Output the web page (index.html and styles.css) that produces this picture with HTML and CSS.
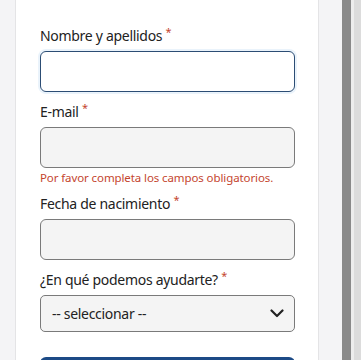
FILE: index.html
```html
<!DOCTYPE html>
<html>
<head>
    <meta charset="utf-8">
    <title>Formulario de contacto</title>
    <link rel="stylesheet" href="styles.css">
</head>
<body>
    <div class="page">
        <div class="card">
            <form class="form">
                <div class="field">
                    <label class="label" for="nombre">Nombre y apellidos <span class="req">*</span></label>
                    <input type="text" class="input input-focus" id="nombre">
                </div>
                <div class="field">
                    <label class="label" for="email">E-mail <span class="req">*</span></label>
                    <input type="text" class="input" id="email">
                    <div class="error">Por favor completa los campos obligatorios.</div>
                </div>
                <div class="field">
                    <label class="label" for="fecha">Fecha de nacimiento <span class="req">*</span></label>
                    <input type="text" class="input" id="fecha">
                </div>
                <div class="field">
                    <label class="label" for="ayuda">¿En qué podemos ayudarte? <span class="req">*</span></label>
                    <div class="select">
                        <span>-- seleccionar --</span>
                        <svg width="14" height="9" viewBox="0 0 14 9"><path d="M1.5 1.5 L7 7 L12.5 1.5" fill="none" stroke="#222" stroke-width="2.2" stroke-linecap="round" stroke-linejoin="round"/></svg>
                    </div>
                </div>
                <div class="btn"></div>
            </form>
        </div>
        <div class="gutter"></div>
    </div>
    <div class="scrollbar">
        <div class="thumb"></div>
        <div class="track"></div>
    </div>
</body>
</html>
```

FILE: styles.css
```css
html, body {
    margin: 0;
    height: 100%;
    overflow: hidden;
}

body {
    display: flex;
    background: #f4f4f6;
    font-family: "Noto Sans", "Open Sans", sans-serif;
    color: #222;
}

.page {
    flex: 1;
    display: flex;
    padding-left: 15px;
}

.card {
    box-sizing: border-box;
    flex: 0 0 304px;
    background: #fff;
    border-left: 1px solid #e4e4e6;
    border-right: 1px solid #e4e4e6;
    padding: 23px 23px 0 24px;
}

.gutter {
    flex: 1;
}

.field {
    display: flex;
    flex-direction: column;
    margin-bottom: 7px;
}

.label {
    font-size: 14px;
    line-height: 20px;
    padding-top: 3px;
    margin-bottom: 5px;
    letter-spacing: -0.3px;
}

.req {
    color: #c4452e;
    font-size: 11px;
    line-height: 0;
    vertical-align: 5px;
}

.input {
    box-sizing: border-box;
    height: 41px;
    width: 100%;
    margin: 0;
    border: 1px solid #7a7a7a;
    border-radius: 6px;
    background: #f4f4f4;
    font-family: inherit;
}

.input-focus {
    background: #fff;
    border-color: #2c4d74;
    box-shadow: 0 0 0 2px #eaf3fb;
    outline: none;
}

.error {
    color: #c4452e;
    font-size: 11.5px;
    line-height: 14px;
    margin-top: 3px;
    margin-bottom: -1px;
    letter-spacing: -0.1px;
}

.select {
    box-sizing: border-box;
    height: 37px;
    display: flex;
    align-items: center;
    justify-content: space-between;
    padding: 0 10px 0 11px;
    border: 1px solid #7a7a7a;
    border-radius: 5px;
    background: #f4f4f4;
    font-size: 14px;
    letter-spacing: -0.3px;
}

.btn {
    margin-top: 25px;
    height: 40px;
    border-radius: 6px;
    background: #1c4a86;
}

.scrollbar {
    display: flex;
    width: 19px;
}

.thumb {
    width: 9px;
    background: #8a8a8a;
}

.track {
    flex: 1;
    background: #dcdcdc;
    border-left: 3px solid #ededed;
}
```
